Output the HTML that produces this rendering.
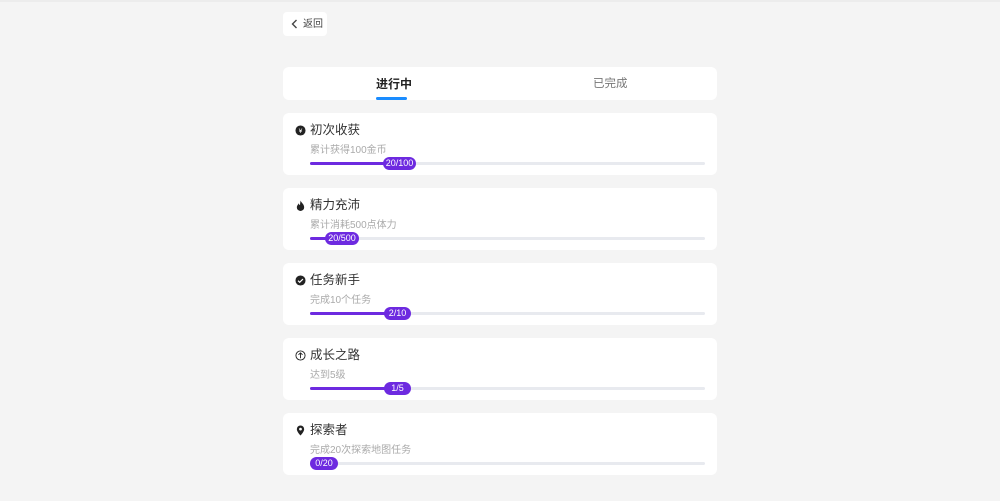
<!DOCTYPE html><html><head><meta charset="utf-8"><style>
body{margin:0;width:1000px;height:501px;background:#f4f4f4;font-family:"Liberation Sans","Noto Sans CJK SC",sans-serif;position:relative;overflow:hidden}
.abs{position:absolute}
.back{left:283px;top:12px;width:44px;height:24px;background:#fff;border-radius:4px;font-size:10px;color:#444}
.tabs{left:283px;top:67px;width:434px;height:33px;background:#fff;border-radius:6px}
.card{left:283px;width:434px;height:62px;background:#fff;border-radius:6px}
.t{left:27px;top:10px;font-size:12.5px;line-height:14px;color:#333}
.s{left:27px;top:32px;font-size:10px;line-height:12px;color:#aaa}
.tr{left:27px;top:49px;width:395px;height:3px;background:#e8eaef;border-radius:2px}
.f{left:27px;top:49px;height:3px;background:#6d2ae0;border-radius:2px}
.p{top:44px;height:13px;border-radius:6.5px;background:#6d2ae0;color:#fff;font-size:9px;line-height:13px;text-align:center}
.ic{left:12px;top:12px;width:11px;height:11px}
</style></head><body>
<div class="abs" style="left:0;top:0;width:1000px;height:2px;background:#ececec"></div>
<div class="abs back"><svg class="abs" style="left:8px;top:7px" width="7" height="10" viewBox="0 0 7 10"><path d="M5.5 1L1.5 5l4 4" stroke="#444" stroke-width="1.4" fill="none"/></svg><span class="abs" style="left:20px;top:6px;line-height:13px">返回</span></div>
<div class="abs tabs"><span class="abs" style="left:93px;top:10px;font-size:12px;line-height:14px;font-weight:bold;color:#222">进行中</span><div class="abs" style="left:93px;top:30px;width:31px;height:3px;background:#1a8cff;border-radius:2px"></div><span class="abs" style="left:310px;top:10px;font-size:11.5px;line-height:14px;color:#777">已完成</span></div>

<div class="abs card" style="top:113px"><svg class="abs ic" viewBox="0 0 12 12"><circle cx="6" cy="6" r="5.5" fill="#222"/><text x="6" y="8.5" font-size="7" fill="#fff" text-anchor="middle">¥</text></svg><span class="abs t">初次收获</span><span class="abs s">累计获得100金币</span><div class="abs tr"></div><div class="abs f" style="width:80px"></div><div class="abs p" style="left:100px;width:33px">20/100</div></div>

<div class="abs card" style="top:188px"><svg class="abs ic" viewBox="0 0 12 12"><path d="M6 0.5C7 3 10 4.5 10 8a4 4 0 0 1-8 0C2 6 3.5 5 4 3.5 4.5 5 5 5.5 5.5 5.5 5.5 3.5 6 2 6 0.5z" fill="#222"/></svg><span class="abs t">精力充沛</span><span class="abs s">累计消耗500点体力</span><div class="abs tr"></div><div class="abs f" style="width:18px"></div><div class="abs p" style="left:42px;width:34px">20/500</div></div>

<div class="abs card" style="top:263px"><svg class="abs ic" viewBox="0 0 12 12"><circle cx="6" cy="6" r="5.5" fill="#222"/><path d="M3.3 6.2l1.8 1.8 3.6-3.6" stroke="#fff" stroke-width="1.3" fill="none"/></svg><span class="abs t">任务新手</span><span class="abs s">完成10个任务</span><div class="abs tr"></div><div class="abs f" style="width:80px"></div><div class="abs p" style="left:101px;width:27px">2/10</div></div>

<div class="abs card" style="top:338px"><svg class="abs ic" viewBox="0 0 12 12"><circle cx="6" cy="6" r="5" fill="none" stroke="#222" stroke-width="1"/><path d="M6 9V3.3M3.8 5.3L6 3.1l2.2 2.2" stroke="#222" stroke-width="1" fill="none"/></svg><span class="abs t">成长之路</span><span class="abs s">达到5级</span><div class="abs tr"></div><div class="abs f" style="width:80px"></div><div class="abs p" style="left:101px;width:27px">1/5</div></div>

<div class="abs card" style="top:413px"><svg class="abs ic" viewBox="0 0 12 12"><path d="M6 0.5a4 4 0 0 1 4 4c0 3-4 7-4 7s-4-4-4-7a4 4 0 0 1 4-4z" fill="#222"/><circle cx="6" cy="4.5" r="1.5" fill="#fff"/></svg><span class="abs t">探索者</span><span class="abs s">完成20次探索地图任务</span><div class="abs tr"></div><div class="abs p" style="left:27px;width:28px">0/20</div></div>
</body></html>
